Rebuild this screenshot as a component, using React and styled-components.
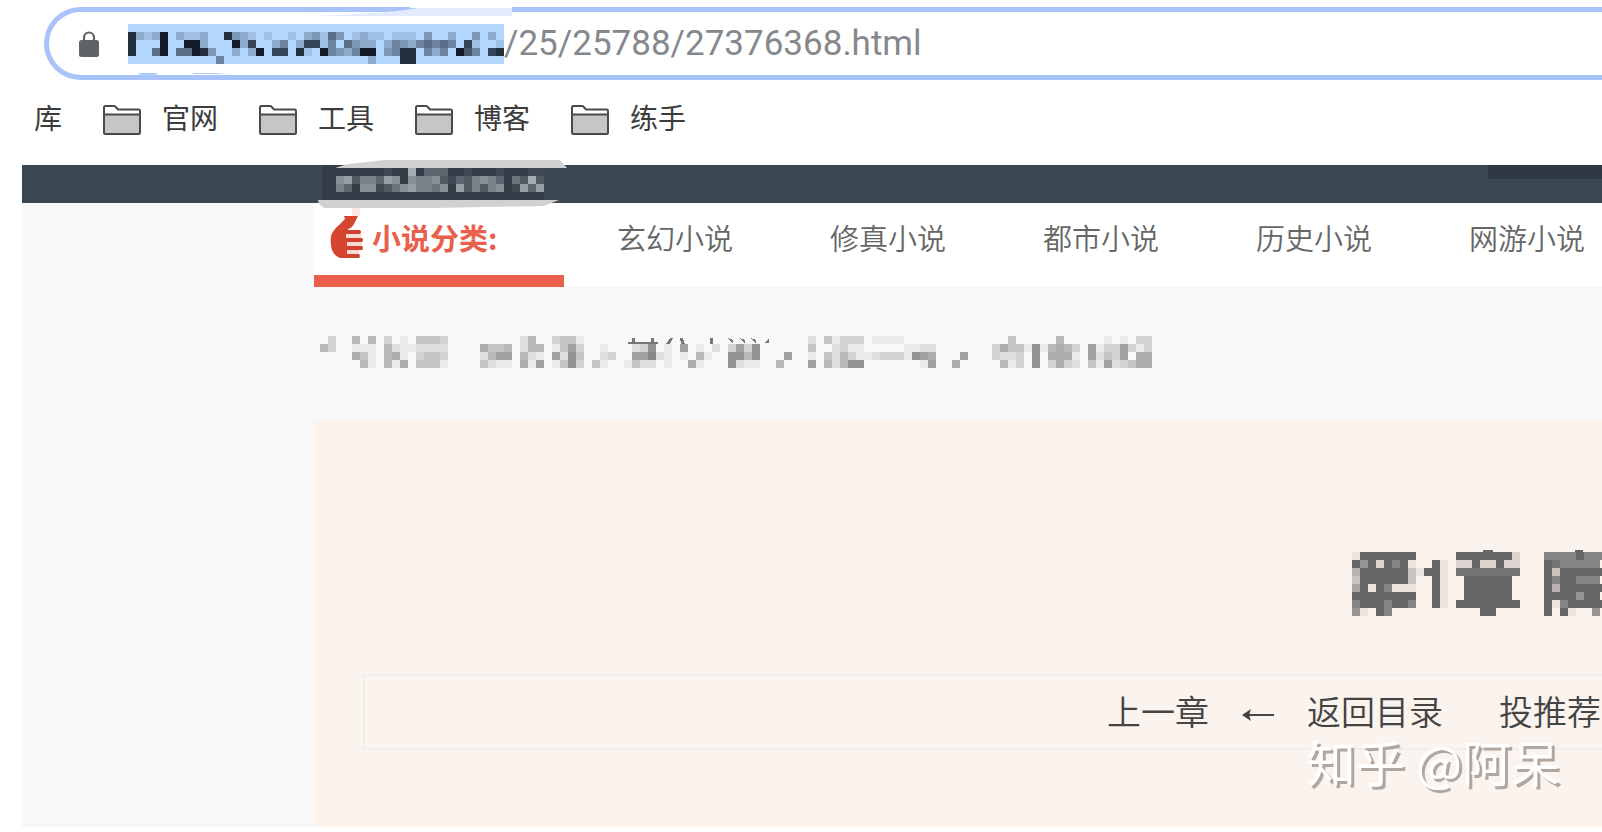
import React from "react";
import styled, { createGlobalStyle } from "styled-components";

const bookmarks = ["官网", "工具", "博客", "练手"];
const categories = ["玄幻小说", "修真小说", "都市小说", "历史小说", "网游小说"];

// each character is one 8px cell: "." is empty, 1-9 is the strength of the colour
const hostCells = [
    "82129 .2112 ..832 1.1.. 1.231 53.12 11.11 1.3.. 2..3. 2.",
    "8...9 ..992 ...92 7..24 .2771 4.532 2.243 24545 4.71. .1",
    "8..59 .5598 3..2. 29.77 .81.9 43249 9.348 8.424 .964. 78",
    "..... ..... .4... ..... ..... ..... 2...8 8.... ..... ..",
];
const logoCells = [
    "..... ..1.. 8.333 ..1.. .1... 11",
    ".6725 5376. 65562 13256 53.42 82",
    ".53.6 61246 75546 .7252 56.17 37",
];
const crumbCells = [
    ".3..5.5.3. 1.4443.... .....25..3 441....... .......... .......... .2.41333.1 111....... ......4... ..5.....1. 1.33",
    "53..111.52 112222.... 6445.255.1 473..1...2 38.1.7.1.2 .3738..... .4..2311.. ...1122... ....364418 15653.7133 7313",
    "....641.56 1.3443.... 2577.521.7 284..23..7 7921.1.51. .8858...7. .1.4253112 3331876... 7...3223.8 .6661.7243 7.66",
    ".....51.51 6.4441.... 4211.617.1 483.41..14 22.1..61.. .8211..5.. .7.52588.. .....17..6 .....513.8 .3632.4172 3466",
];
const titleCells = [
    "19999999 ..... 99999992 ... 77779777",
    "96929791 ..91. 22922922 ... 9877777.",
    "49999993 1991. 88888888 ... 93999999",
    "39999993 ..91. .999999. ... 9799777.",
    "59197111 ..91. .999999. ... 94999999",
    "99999999 ..91. .999999. ... 9999699.",
    "79997997 ..91. 99999999 ... 91799999",
    "61.97... ..... ...99... ... 9.91..6.",
];

function Mosaic({ cells, color, children }) {
    const rows = cells.map((row) => row.replaceAll(" ", ""));
    const width = rows[0].length * 8;
    const height = rows.length * 8;
    return (
        <MosaicSvg width={width} height={height} viewBox={`0 0 ${width} ${height}`} aria-hidden="true">
            {rows.map((row, y) =>
                [...row].map((cell, x) =>
                    cell === "." ? null : (
                        <rect
                            key={`${x}-${y}`}
                            x={x * 8}
                            y={y * 8}
                            width="8"
                            height="8"
                            fill={color}
                            fillOpacity={cell / 9}
                        />
                    )
                )
            )}
            {children}
        </MosaicSvg>
    );
}

function LockIcon() {
    return (
        <svg width="20" height="26" viewBox="0 0 20 26" aria-hidden="true">
            <path d="M5 10V6.500a5 5 0 0 1 10 0V10" fill="none" stroke="#5f6368" strokeWidth="2.200" />
            <rect y="9" width="20" height="17" rx="2.500" fill="#5f6368" />
        </svg>
    );
}

function FolderIcon() {
    return (
        <svg width="38" height="30" viewBox="0 0 38 30" aria-hidden="true">
            <path
                d="M1 27V2.500Q1 1 2.500 1H11Q12 1 12.800 2L15 4.500H35.500Q37 4.500 37 6V27.500Q37 29 35.500 29H2.500Q1 29 1 27.500Z"
                fill="#fff"
            />
            <path d="M1 9.500H37V27.500Q37 29 35.500 29H2.500Q1 29 1 27.500Z" fill="#c6c6c6" />
            <path
                d="M1 27V2.500Q1 1 2.500 1H11Q12 1 12.800 2L15 4.500H35.500Q37 4.500 37 6V27.500Q37 29 35.500 29H2.500Q1 29 1 27.500ZM1 9.500H37"
                fill="none"
                stroke="#4a4a4a"
                strokeWidth="2"
            />
        </svg>
    );
}

function HandIcon() {
    return (
        <svg width="34" height="50" viewBox="0 0 34 50" aria-hidden="true">
            <path d="M22 0H30V8H22Z" fill="#fbe9e6" />
            <path
                d="M14 8H28L24 16Q22 20 18 21V50H10Q4 48 2 42Q0 36 1 28Q3 22 9 17L15 11Z"
                fill="#d6452f"
            />
            <path d="M16 26H31V30H16ZM17 34H32V38H17ZM17 42H29V46H17Z" fill="#fbd9d3" />
            <path
                d="M16 22H30Q32 24 30 26H16ZM17 30H32Q34 32 32 34H17ZM17 38H32Q34 40 32 42H17ZM16 46H29Q31 48 29 50H16Z"
                fill="#cf432e"
            />
        </svg>
    );
}

export default function App() {
    return (
        <Window>
            <GlobalStyle />
            <AddressBar>
                <LockIcon />
                <Host>
                    <Mosaic cells={hostCells} color="#121a28" />
                </Host>
                <AddressInput aria-label="URL" defaultValue="/25/25788/27376368.html" spellCheck="false" />
                <AddressSmudge width="400" height="80" viewBox="0 0 400 80" aria-hidden="true">
                    <path d="M186 9Q270 7 302 0H392V9Z" fill="#e1ebfd" />
                    <path d="M290 0H392V1H290Z" fill="#fff" />
                    <path d="M18 66H38L33 69H22ZM72 66H106L96 67H74Z" fill="#a9ccf8" />
                </AddressSmudge>
            </AddressBar>
            <BookmarkBar>
                <Bookmark href="#">库</Bookmark>
                {bookmarks.map((name) => (
                    <Bookmark key={name} href="#">
                        <FolderIcon />
                        {name}
                    </Bookmark>
                ))}
            </BookmarkBar>
            <Site>
                <TopBar>
                    <Logo>
                        <Mosaic cells={logoCells} color="#b4bac0" />
                        <LogoSmudge width="250" height="50" viewBox="0 0 250 50" aria-hidden="true">
                            <path d="M17 8L30 4L67 0H242L249 8Z" fill="#cfd1d3" />
                            <path d="M0 40H241L226 46L115 48H6L1 44Z" fill="#cfd1d3" />
                        </LogoSmudge>
                    </Logo>
                    <TopPanel />
                </TopBar>
                <Page>
                    <Nav>
                        <NavTitle>
                            <HandIcon />
                            小说分类:
                        </NavTitle>
                        {categories.map((category) => (
                            <NavLink key={category} href="#">
                                {category}
                            </NavLink>
                        ))}
                    </Nav>
                    <Breadcrumb>
                        <Mosaic cells={crumbCells} color="#868686">
                            <path
                                d="M308 8H338V6H334V2H331V6H315V2H312V6H308ZM346 8L350 2H353L350 8ZM360 2H363L365 8H361ZM390 2H393V8H390ZM408 2L413 4V8ZM420 2L425 4V8ZM431 2L436 4V8ZM445 7L449 2V7Z"
                                fill="#777"
                            />
                        </Mosaic>
                    </Breadcrumb>
                    <Chapter>
                        <ChapterTitle aria-label="第1章">
                            <Mosaic cells={titleCells} color="#656565">
                                <path d="M131 0V-2H141V0ZM223 0V-2H231V0Z" fill="#656565" />
                            </Mosaic>
                        </ChapterTitle>
                        <ChapterNav>
                            <ChapterLink href="#">上一章</ChapterLink>
                            <svg width="34" height="16" viewBox="0 0 34 16" aria-hidden="true">
                                <path d="M4 12H33" stroke="#444" strokeWidth="2" />
                                <path d="M1 12L10 6L8 12L10 18Z" fill="#444" />
                            </svg>
                            <ChapterLink href="#">返回目录</ChapterLink>
                            <ChapterLink href="#" $spaced>
                                投推荐票
                            </ChapterLink>
                        </ChapterNav>
                    </Chapter>
                </Page>
            </Site>
            <Watermark>知乎 @阿呆</Watermark>
        </Window>
    );
}

const GlobalStyle = createGlobalStyle`
    * {
        box-sizing: border-box;
    }
    body {
        margin: 0;
        background: #fff;
        font-family: "Noto Sans CJK SC", sans-serif;
    }
    a {
        color: inherit;
        text-decoration: none;
    }
    svg {
        display: block;
        flex-shrink: 0;
        overflow: visible;
    }
`;
const Window = styled.div`
    position: relative;
    min-height: 100vh;
    padding: 7px 0 5px;
    display: flex;
    flex-direction: column;
    overflow: hidden;
`;
const MosaicSvg = styled.svg`
    shape-rendering: crispEdges;
`;
const AddressBar = styled.div`
    position: relative;
    display: flex;
    align-items: center;
    margin-left: 44px;
    padding-left: 30px;
    height: 73px;
    border: 5px solid #a8c3f9;
    border-right: none;
    border-radius: 37px 0 0 37px;
`;
const Host = styled.div`
    margin-left: 29px;
    padding: 8px 0 0;
    height: 40px;
    background: #b2d6fd;
`;
const AddressInput = styled.input`
    flex: 1;
    min-width: 0;
    padding: 0;
    border: none;
    outline: none;
    background: transparent;
    color: #85888c;
    font: 35px Roboto, sans-serif;
`;
const AddressSmudge = styled.svg`
    position: absolute;
    left: 71px;
    top: -5px;
`;
const BookmarkBar = styled.nav`
    display: flex;
    align-items: flex-start;
    gap: 41px;
    height: 85px;
    padding: 25px 0 0 34px;
`;
const Bookmark = styled.a`
    display: flex;
    align-items: flex-start;
    gap: 21px;
    color: #3c3c3c;
    font-size: 28px;
    line-height: 25px;
    white-space: nowrap;
`;
const Site = styled.div`
    flex: 1;
    display: flex;
    flex-direction: column;
    margin-left: 22px;
    background: #f8f8f8;
`;
const TopBar = styled.header`
    display: flex;
    justify-content: space-between;
    height: 38px;
    padding-left: 300px;
    background: #3c4851;
`;
const Logo = styled.div`
    position: relative;
    height: 38px;
    padding: 3px 0 0 6px;
    background: #323d47;
`;
const LogoSmudge = styled.svg`
    position: absolute;
    left: -4px;
    top: -5px;
`;
const TopPanel = styled.div`
    width: 114px;
    height: 14px;
    background: #2e3943;
`;
const Page = styled.main`
    flex: 1;
    display: flex;
    flex-direction: column;
    margin-left: 292px;
`;
const Nav = styled.nav`
    display: flex;
    height: 84px;
    background: #fff;
    font-size: 29px;
    line-height: 68px;
    white-space: nowrap;
    overflow: hidden;
`;
const NavTitle = styled.div`
    display: flex;
    align-items: flex-start;
    flex-shrink: 0;
    gap: 8px;
    width: 250px;
    padding-left: 16px;
    border-bottom: 12px solid #e8604c;
    color: #e8604c;
    font-weight: 700;

    svg {
        margin-top: 5px;
    }
`;
const NavLink = styled.a`
    flex-shrink: 0;
    width: 213px;
    padding-left: 53px;
    color: #666;
    font-weight: 350;
`;
const Breadcrumb = styled.div`
    height: 132px;
    padding: 49px 0 0 6px;
`;
const Chapter = styled.article`
    flex: 1;
    padding: 133px 0 0 49px;
    background: #fbf3ed;
    overflow: hidden;
`;
const ChapterTitle = styled.h1`
    margin: 0 0 58px 989px;
`;
const ChapterNav = styled.nav`
    display: flex;
    align-items: center;
    gap: 32px;
    height: 76px;
    padding: 0 0 2px 742px;
    border: 2px solid #f0eeea;
    border-right: none;
    color: #444;
    font-size: 34px;
    line-height: 68px;
    font-weight: 350;
    white-space: nowrap;
`;
const ChapterLink = styled.a`
    flex-shrink: 0;
    margin-left: ${({ $spaced }) => ($spaced ? "24px" : "0")};
`;
const Watermark = styled.div`
    position: absolute;
    right: 42px;
    bottom: 36px;
    color: #fff;
    font-size: 49px;
    line-height: 70px;
    text-shadow: 3px 3px 0 #aea7a2;
    white-space: nowrap;
`;
